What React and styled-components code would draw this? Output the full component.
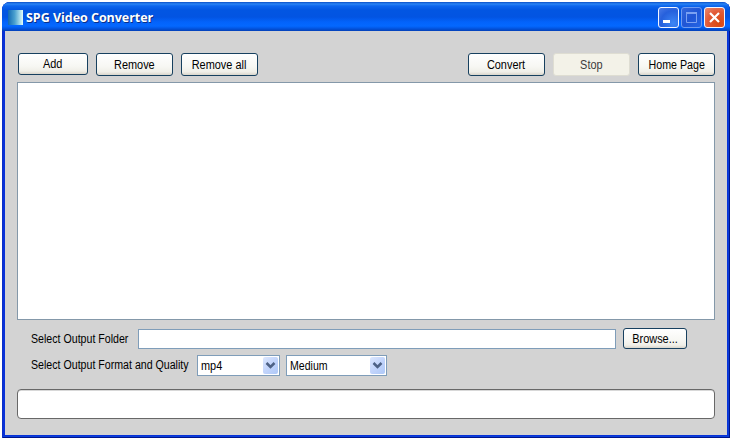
import React from "react";
import styled, { createGlobalStyle } from "styled-components";

const GlobalStyle = createGlobalStyle`
  * { box-sizing: border-box; }
  body { margin: 0; background: #fff; overflow: hidden; }
`;

const Page = styled.div`
  width: 731px;
  height: 440px;
  padding: 2px 1px 2px 2px;
  font: 12px/14px "Liberation Sans", Arial, sans-serif;
  color: #000;
`;

const Window = styled.div`
  display: flex;
  flex-direction: column;
  width: 728px;
  height: 436px;
  border-radius: 8px 8px 0 0;
  overflow: hidden;
  padding: 0 3px 3px;
  background: #0831d9;
  box-shadow: inset 1px 0 #0a2fc8, inset -1px -1px #00138c, inset -2px -2px #0a3fd8;
`;

const TitleBar = styled.header`
  display: flex;
  flex: none;
  align-items: center;
  height: 29px;
  margin: 0 -3px;
  padding: 1px 5px 0 6px;
  background: linear-gradient(
    #0a50c8 0, #2a84f4 2px, #0d66ee 4px, #0256e2 8px, #0254e2 15px,
    #0363fb 20px, #0468ff 24px, #0359e8 26px, #0340b8 29px
  );
`;

const AppIcon = styled.span`
  width: 15px;
  height: 15px;
  margin-right: 3px;
  background: linear-gradient(90deg, #1269b4, #4ba1cf 45%, #c6eef3 90%, #e4fbfa);
`;

const Title = styled.h1`
  flex: 1;
  margin: 2px 0 0;
  font: bold 12.5px/16px "Open Sans", "Noto Sans", sans-serif;
  letter-spacing: ${(p) => p.$spacing};
  color: #fff;
  text-shadow: 1px 1px #0b2f87;
  white-space: nowrap;
`;

const CaptionButtons = styled.div`
  display: flex;
  gap: 2px;
`;

const captionFill = {
  blue: "radial-gradient(circle at 75% 80%, #3c86f5, #2660dc 60%, #4b7be6)",
  muted: "linear-gradient(135deg, #3467dc, #1f55d5 50%, #2466e6)",
  red: "radial-gradient(circle at 75% 80%, #d9480f, #e25a36 55%, #e98a70)",
};

const CaptionButton = styled.button`
  width: 21px;
  height: 21px;
  padding: 0;
  border: 1px solid ${(p) => (p.$tone === "muted" ? "#6f9bf0" : "#f2f5ff")};
  border-radius: 3px;
  background: ${(p) => captionFill[p.$tone]};
  svg { display: block; }
`;

const Client = styled.main`
  display: flex;
  flex-direction: column;
  flex: 1;
  padding: 22px 12px 0;
  background: #d3d3d3;
`;

const Toolbar = styled.div`
  display: flex;
  flex: none;
  gap: 8px;
  height: 29px;
  padding-left: 1px;
`;

const Spacer = styled.span`
  flex: 1;
`;

const Button = styled.button`
  display: flex;
  flex: none;
  align-items: center;
  justify-content: center;
  width: ${(p) => p.$width || 77}px;
  height: ${(p) => p.$height || 23}px;
  padding: 0;
  border: 1px solid #17405f;
  border-radius: 3px;
  background: linear-gradient(#fff, #f7f7f3 60%, #f0efe8 85%, #d9d5cb);
  font: inherit;
  color: #000;
  &:disabled {
    border-color: #deddd2;
    background: #f3f2e8;
    color: #3c3c3c;
  }
`;

const Label = styled.span`
  display: inline-block;
  transform: scaleX(${(p) => p.$squeeze || 0.91});
  transform-origin: ${(p) => p.$origin || "center"};
  white-space: nowrap;
`;

const FileList = styled.div`
  flex: none;
  height: 238px;
  border: 1px solid #8498a9;
  background: #fff;
`;

const FormRow = styled.div`
  display: flex;
  flex: none;
  align-items: center;
  height: 21px;
  margin-top: ${(p) => p.$top}px;
  padding-left: 14px;
`;

const FieldName = styled.label`
  flex: none;
  width: ${(p) => p.$width}px;
  padding-bottom: ${(p) => p.$lift || 0}px;
`;

const PathInput = styled.input`
  width: 478px;
  height: 20px;
  margin-right: 7px;
  padding: 0 4px;
  border: 1px solid #7f9db9;
  background: #fff;
  font: inherit;
`;

const Select = styled.div`
  display: flex;
  align-items: center;
  justify-content: space-between;
  width: ${(p) => p.$width}px;
  height: 21px;
  margin-right: 6px;
  padding: 1px 1px 1px 3px;
  border: 1px solid #7f9db9;
  background: #fff;
`;

const DropArrow = styled.span`
  display: flex;
  align-items: center;
  justify-content: center;
  width: 15px;
  height: 17px;
  border-radius: 2px;
  background: linear-gradient(135deg, #dce7fe, #c2d4fb 50%, #aec8f7);
`;

const Progress = styled.div`
  flex: none;
  height: 30px;
  margin-top: 13px;
  border: 1px solid #686868;
  border-radius: 4px;
  background: #fff;
  box-shadow: inset 0 1px #d8d8d8;
`;

const Dropdown = ({ width, squeeze, children }) => (
  <Select $width={width}>
    <Label $squeeze={squeeze} $origin="left">{children}</Label>
    <DropArrow>
      <svg width="11" height="9" viewBox="0 0 11 9">
        <path d="M1.500 2 5.500 6 9.500 2" fill="none" stroke="#4d6185" strokeWidth="2.500" />
      </svg>
    </DropArrow>
  </Select>
);

export default function App() {
  return (
    <Page>
      <GlobalStyle />
      <Window>
        <TitleBar>
          <AppIcon />
          <Title $spacing="-0.03px">SPG Video Converter</Title>
          <CaptionButtons>
            <CaptionButton $tone="blue" aria-label="Minimize">
              <svg width="19" height="19"><rect x="4" y="12" width="7" height="3" fill="#fff" /></svg>
            </CaptionButton>
            <CaptionButton $tone="muted" aria-label="Maximize">
              <svg width="19" height="19">
                <path d="M4.500 5v9.500h10V5" fill="none" stroke="#7ba1f2" />
                <rect x="4" y="4" width="11" height="2" fill="#7ba1f2" />
              </svg>
            </CaptionButton>
            <CaptionButton $tone="red" aria-label="Close">
              <svg width="19" height="19"><path d="M5 5l9 9M14 5l-9 9" stroke="#fff" strokeWidth="2.200" /></svg>
            </CaptionButton>
          </CaptionButtons>
        </TitleBar>
        <Client>
          <Toolbar>
            <Button $width={70} $height={22}><Label>Add</Label></Button>
            <Button><Label>Remove</Label></Button>
            <Button><Label>Remove all</Label></Button>
            <Spacer />
            <Button><Label>Convert</Label></Button>
            <Button disabled><Label>Stop</Label></Button>
            <Button><Label $squeeze={0.89}>Home Page</Label></Button>
          </Toolbar>
          <FileList />
          <FormRow $top={8}>
            <FieldName $width={107}><Label $squeeze={0.885} $origin="left">Select Output Folder</Label></FieldName>
            <PathInput aria-label="Output folder" />
            <Button $width={64} $height={21}><Label>Browse...</Label></Button>
          </FormRow>
          <FormRow $top={6}>
            <FieldName $width={166} $lift={2}>
              <Label $squeeze={0.885} $origin="left">Select Output Format and Quality</Label>
            </FieldName>
            <Dropdown width={83} squeeze={0.91}>mp4</Dropdown>
            <Dropdown width={101} squeeze={0.88}>Medium</Dropdown>
          </FormRow>
          <Progress />
        </Client>
      </Window>
    </Page>
  );
}
